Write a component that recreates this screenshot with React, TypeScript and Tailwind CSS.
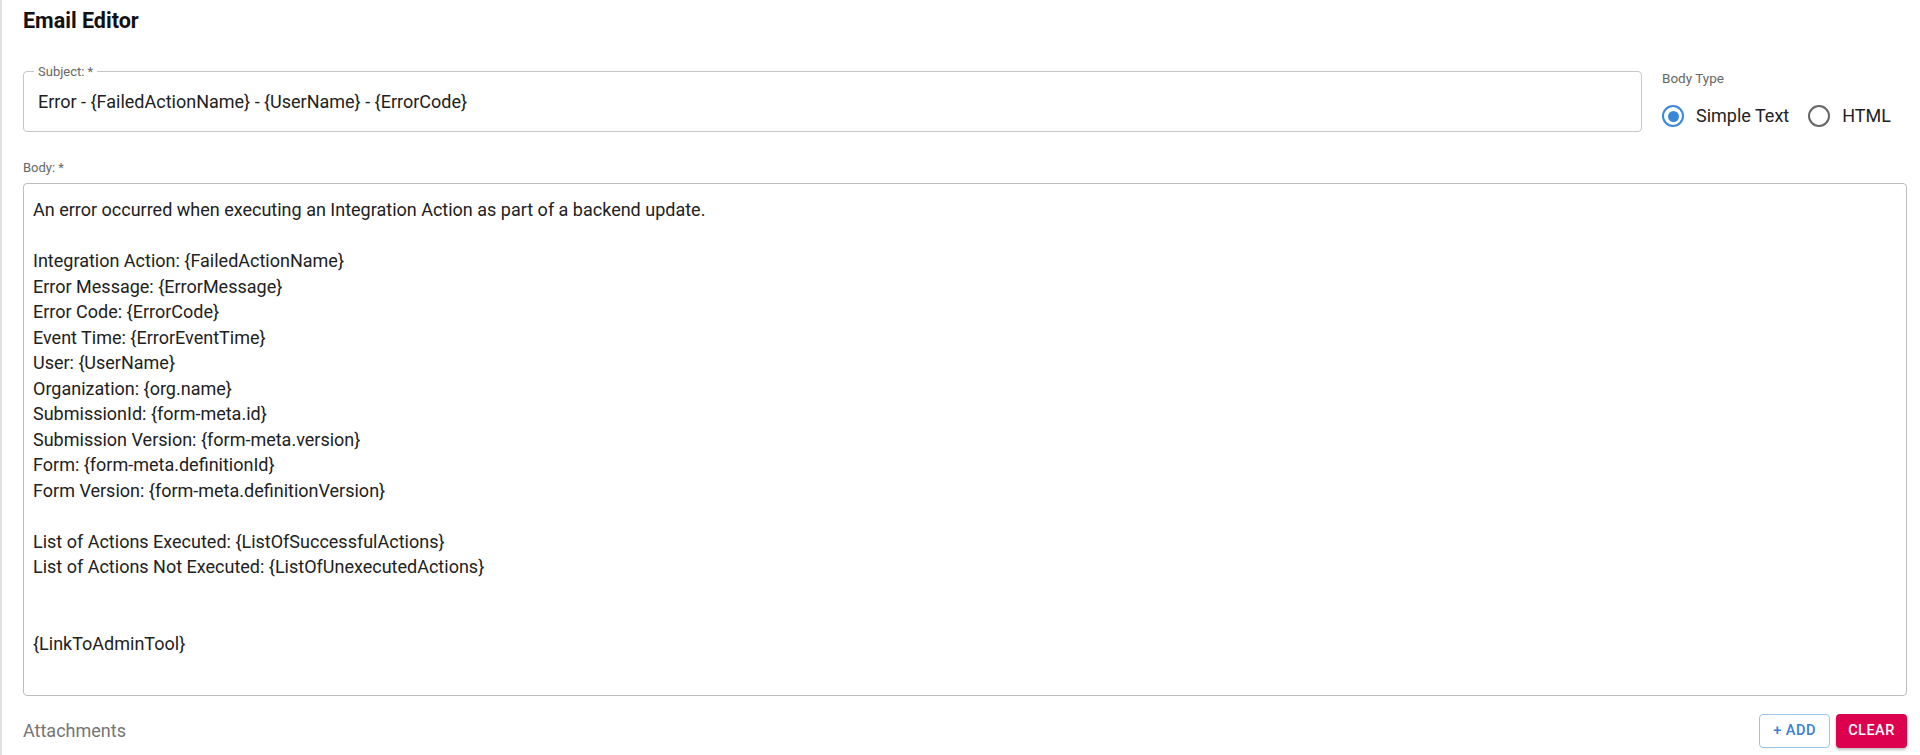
const bodyLines = [
  "An error occurred when executing an Integration Action as part of a backend update.",
  "",
  "Integration Action: {FailedActionName}",
  "Error Message: {ErrorMessage}",
  "Error Code: {ErrorCode}",
  "Event Time: {ErrorEventTime}",
  "User: {UserName}",
  "Organization: {org.name}",
  "SubmissionId: {form-meta.id}",
  "Submission Version: {form-meta.version}",
  "Form: {form-meta.definitionId}",
  "Form Version: {form-meta.definitionVersion}",
  "",
  "List of Actions Executed: {ListOfSuccessfulActions}",
  "List of Actions Not Executed: {ListOfUnexecutedActions}",
  "",
  "",
  "{LinkToAdminTool}",
];

function Radio({ checked, label }: { checked?: boolean; label: string }) {
  return (
    <label className="flex items-center gap-[12px] cursor-pointer">
      <span
        className={
          checked
            ? "flex h-[22px] w-[22px] items-center justify-center rounded-full border-[2px] border-[#3a87da]"
            : "flex h-[22px] w-[22px] items-center justify-center rounded-full border-[2px] border-[#666666]"
        }
      >
        {checked && <span className="h-[11px] w-[11px] rounded-full bg-[#3a87da]" />}
      </span>
      <span className="text-[18px] leading-[22px] text-[#222222]">{label}</span>
    </label>
  );
}

export default function App() {
  return (
    <div className="h-[755px] overflow-hidden border-l-2 border-[#e2e2e2] bg-white pl-[21px] pr-[13px] font-['Roboto','Liberation_Sans',sans-serif] text-[#212121]">
      <h1 className="pt-[10px] text-[21.5px] font-bold leading-[22px] text-[#111111]">
        Email Editor
      </h1>

      <div className="mt-[39px] flex gap-[20px]">
        <div className="relative flex h-[61px] flex-1 items-center rounded-[4px] border border-[#c6c6c6] pl-[14px] pr-[12px]">
          <span className="absolute -top-[8px] left-[10px] bg-white px-[4px] text-[13px] leading-[15px] text-[#666666]">
            Subject: *
          </span>
          <span className="text-[18px] leading-[22px]">
            Error - {"{FailedActionName}"} - {"{UserName}"} - {"{ErrorCode}"}
          </span>
        </div>
        <div className="-mt-[1px] w-[245px]">
          <div className="text-[13.5px] leading-[16px] text-[#666666]">Body Type</div>
          <div className="mt-[19px] flex items-center gap-[19px]">
            <Radio checked label="Simple Text" />
            <Radio label="HTML" />
          </div>
        </div>
      </div>

      <div className="mt-[28px] text-[13px] leading-[16px] text-[#666666]">Body: *</div>

      <div className="mt-[7px] h-[513px] rounded-[4px] border border-[#bdbdbd] pl-[9px] pr-[12px] pt-[13px] text-[18px] leading-[25.5px]">
        {bodyLines.map((line, i) => (
          <div key={i} className="h-[25.5px] whitespace-pre">
            {line}
          </div>
        ))}
      </div>

      <div className="mt-[18px] flex items-center">
        <span className="flex-1 text-[18px] leading-[34px] text-[#757575]">Attachments</span>
        <div className="flex gap-[6px]">
          <button className="h-[34px] w-[71px] rounded-[4px] border border-[#9cc3ea] text-[14.5px] font-medium tracking-[0.5px] text-[#3a80d2]">
            + ADD
          </button>
          <button className="h-[34px] w-[71px] rounded-[4px] bg-[#dc004e] text-[14.5px] font-medium tracking-[0.5px] text-white shadow-[0_2px_3px_rgba(0,0,0,0.25)]">
            CLEAR
          </button>
        </div>
      </div>
    </div>
  );
}
